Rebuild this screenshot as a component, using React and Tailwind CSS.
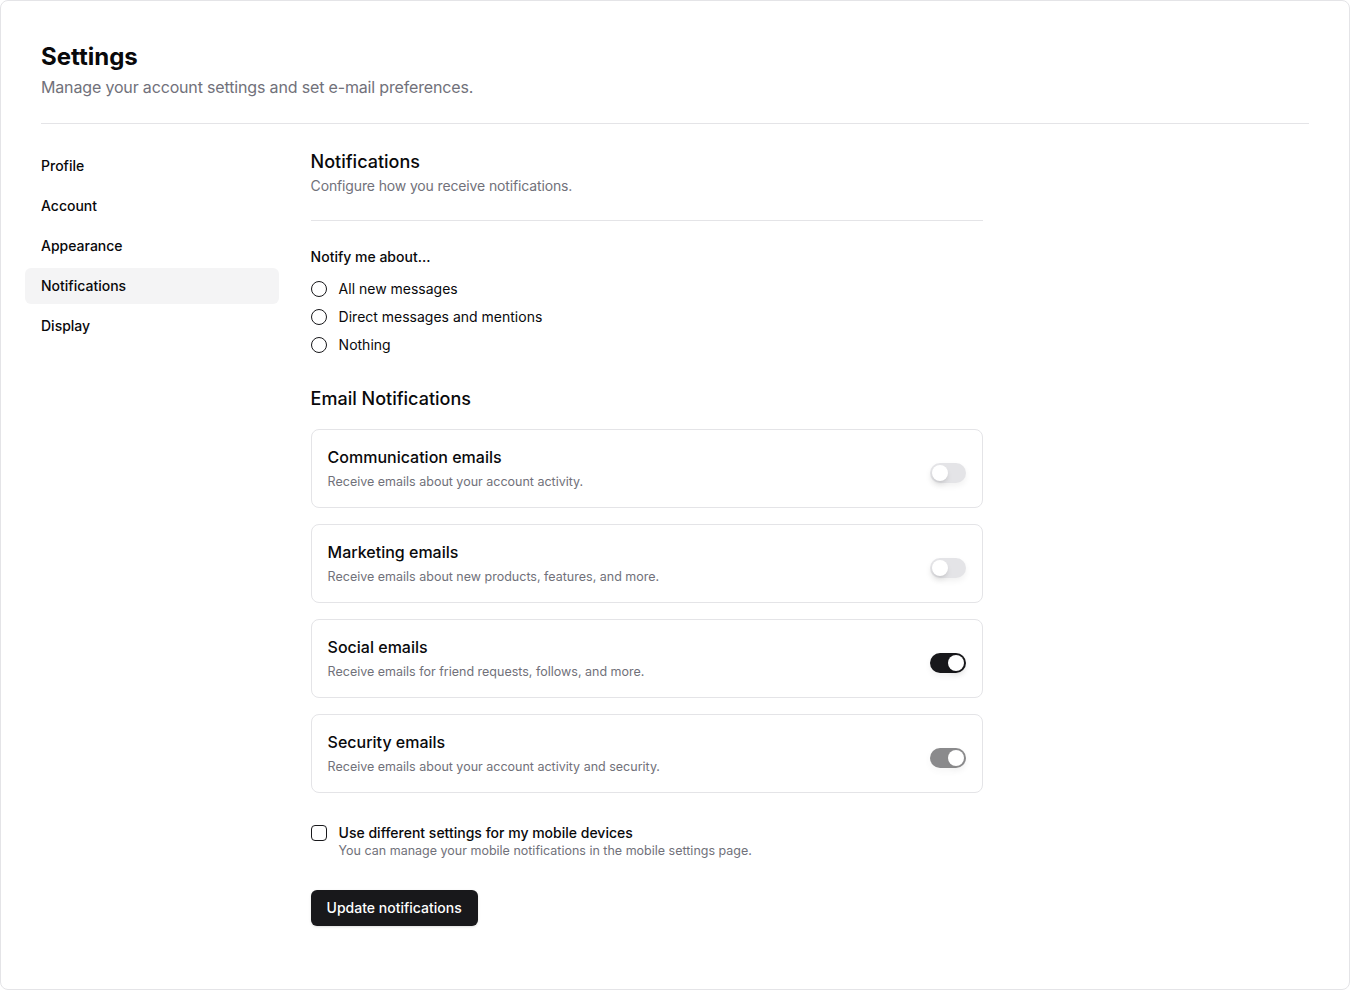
import React, { useState } from "react";

const navItems = ["Profile", "Account", "Appearance", "Notifications", "Display"];

const emailItems = [
    { title: "Communication emails", desc: "Receive emails about your account activity.", on: false },
    { title: "Marketing emails", desc: "Receive emails about new products, features, and more.", on: false },
    { title: "Social emails", desc: "Receive emails for friend requests, follows, and more.", on: true },
    { title: "Security emails", desc: "Receive emails about your account activity and security.", on: true, disabled: true },
];

const Switch = ({ on, disabled }) => (
    <div
        className={`mt-2 flex h-5 w-9 shrink-0 items-center rounded-full p-[2px] shadow-[0_3px_6px_rgba(0,0,0,0.06)] ${
            on ? "bg-[#18181b]" : "bg-[#e4e4e7]"
        } ${disabled ? "opacity-50" : ""}`}>
        <div
            className={`h-4 w-4 rounded-full bg-white shadow-md ${on ? "translate-x-4" : "translate-x-0"}`}></div>
    </div>
);

const App = () => {
    const [active] = useState("Notifications");

    return (
        <div
            className="h-[990px] w-[1350px] rounded-lg border border-[#e4e4e7] bg-white p-10 text-[#09090b]"
            style={{ fontFamily: "Inter, 'Noto Sans', sans-serif" }}>
            <div className="space-y-0.5">
                <h2 className="text-2xl font-bold">Settings</h2>
                <p className="tracking-[-0.01em] text-[#71717a]">Manage your account settings and set e-mail preferences.</p>
            </div>
            <div className="my-6 h-px w-full bg-[#e4e4e7]"></div>
            <div className="flex gap-12">
                <aside className="-mx-4 w-1/5">
                    <nav className="flex flex-col space-y-1">
                        {navItems.map((item) => (
                            <div
                                key={item}
                                className={`flex h-9 items-center rounded-md px-4 text-sm font-medium ${
                                    item === active ? "bg-[#f4f4f5]" : ""
                                }`}>
                                {item}
                            </div>
                        ))}
                    </nav>
                </aside>
                <div className="max-w-2xl flex-1">
                    <div>
                        <h3 className="text-lg font-medium">Notifications</h3>
                        <p className="text-sm tracking-[-0.01em] text-[#71717a]">Configure how you receive notifications.</p>
                    </div>
                    <div className="mt-6 mb-[26px] h-px w-full bg-[#e4e4e7]"></div>
                    <div className="space-y-3">
                        <div className="text-sm font-medium">Notify me about...</div>
                        <div className="flex flex-col space-y-2">
                            {["All new messages", "Direct messages and mentions", "Nothing"].map((opt) => (
                                <div key={opt} className="flex items-center space-x-3">
                                    <div className="h-4 w-4 rounded-full border border-[#18181b]"></div>
                                    <span className="text-sm">{opt}</span>
                                </div>
                            ))}
                        </div>
                    </div>
                    <div className="mt-[30px]">
                        <h3 className="mb-4 text-lg font-medium">Email Notifications</h3>
                        <div className="flex flex-col gap-4">
                            {emailItems.map((it) => (
                                <div
                                    key={it.title}
                                    className="flex items-center justify-between rounded-lg border border-[#e4e4e7] px-4 pt-[15px] pb-[15px]">
                                    <div>
                                        <div className="text-base font-medium">{it.title}</div>
                                        <div className="mt-[3px] text-[12.5px] leading-5 text-[#71717a]">{it.desc}</div>
                                    </div>
                                    <Switch on={it.on} disabled={it.disabled} />
                                </div>
                            ))}
                        </div>
                    </div>
                    <div className="mt-[30px] flex items-start space-x-3">
                        <div className="mt-[2px] h-4 w-4 rounded-[4px] border border-[#18181b]"></div>
                        <div>
                            <div className="text-sm font-medium">Use different settings for my mobile devices</div>
                            <div className="text-[12.5px] leading-4 text-[#71717a]">
                                You can manage your mobile notifications in the mobile settings page.
                            </div>
                        </div>
                    </div>
                    <button className="mt-[31px] h-9 rounded-md bg-[#18181b] px-4 text-sm font-medium text-white shadow">
                        Update notifications
                    </button>
                </div>
            </div>
        </div>
    );
};

export default App;
